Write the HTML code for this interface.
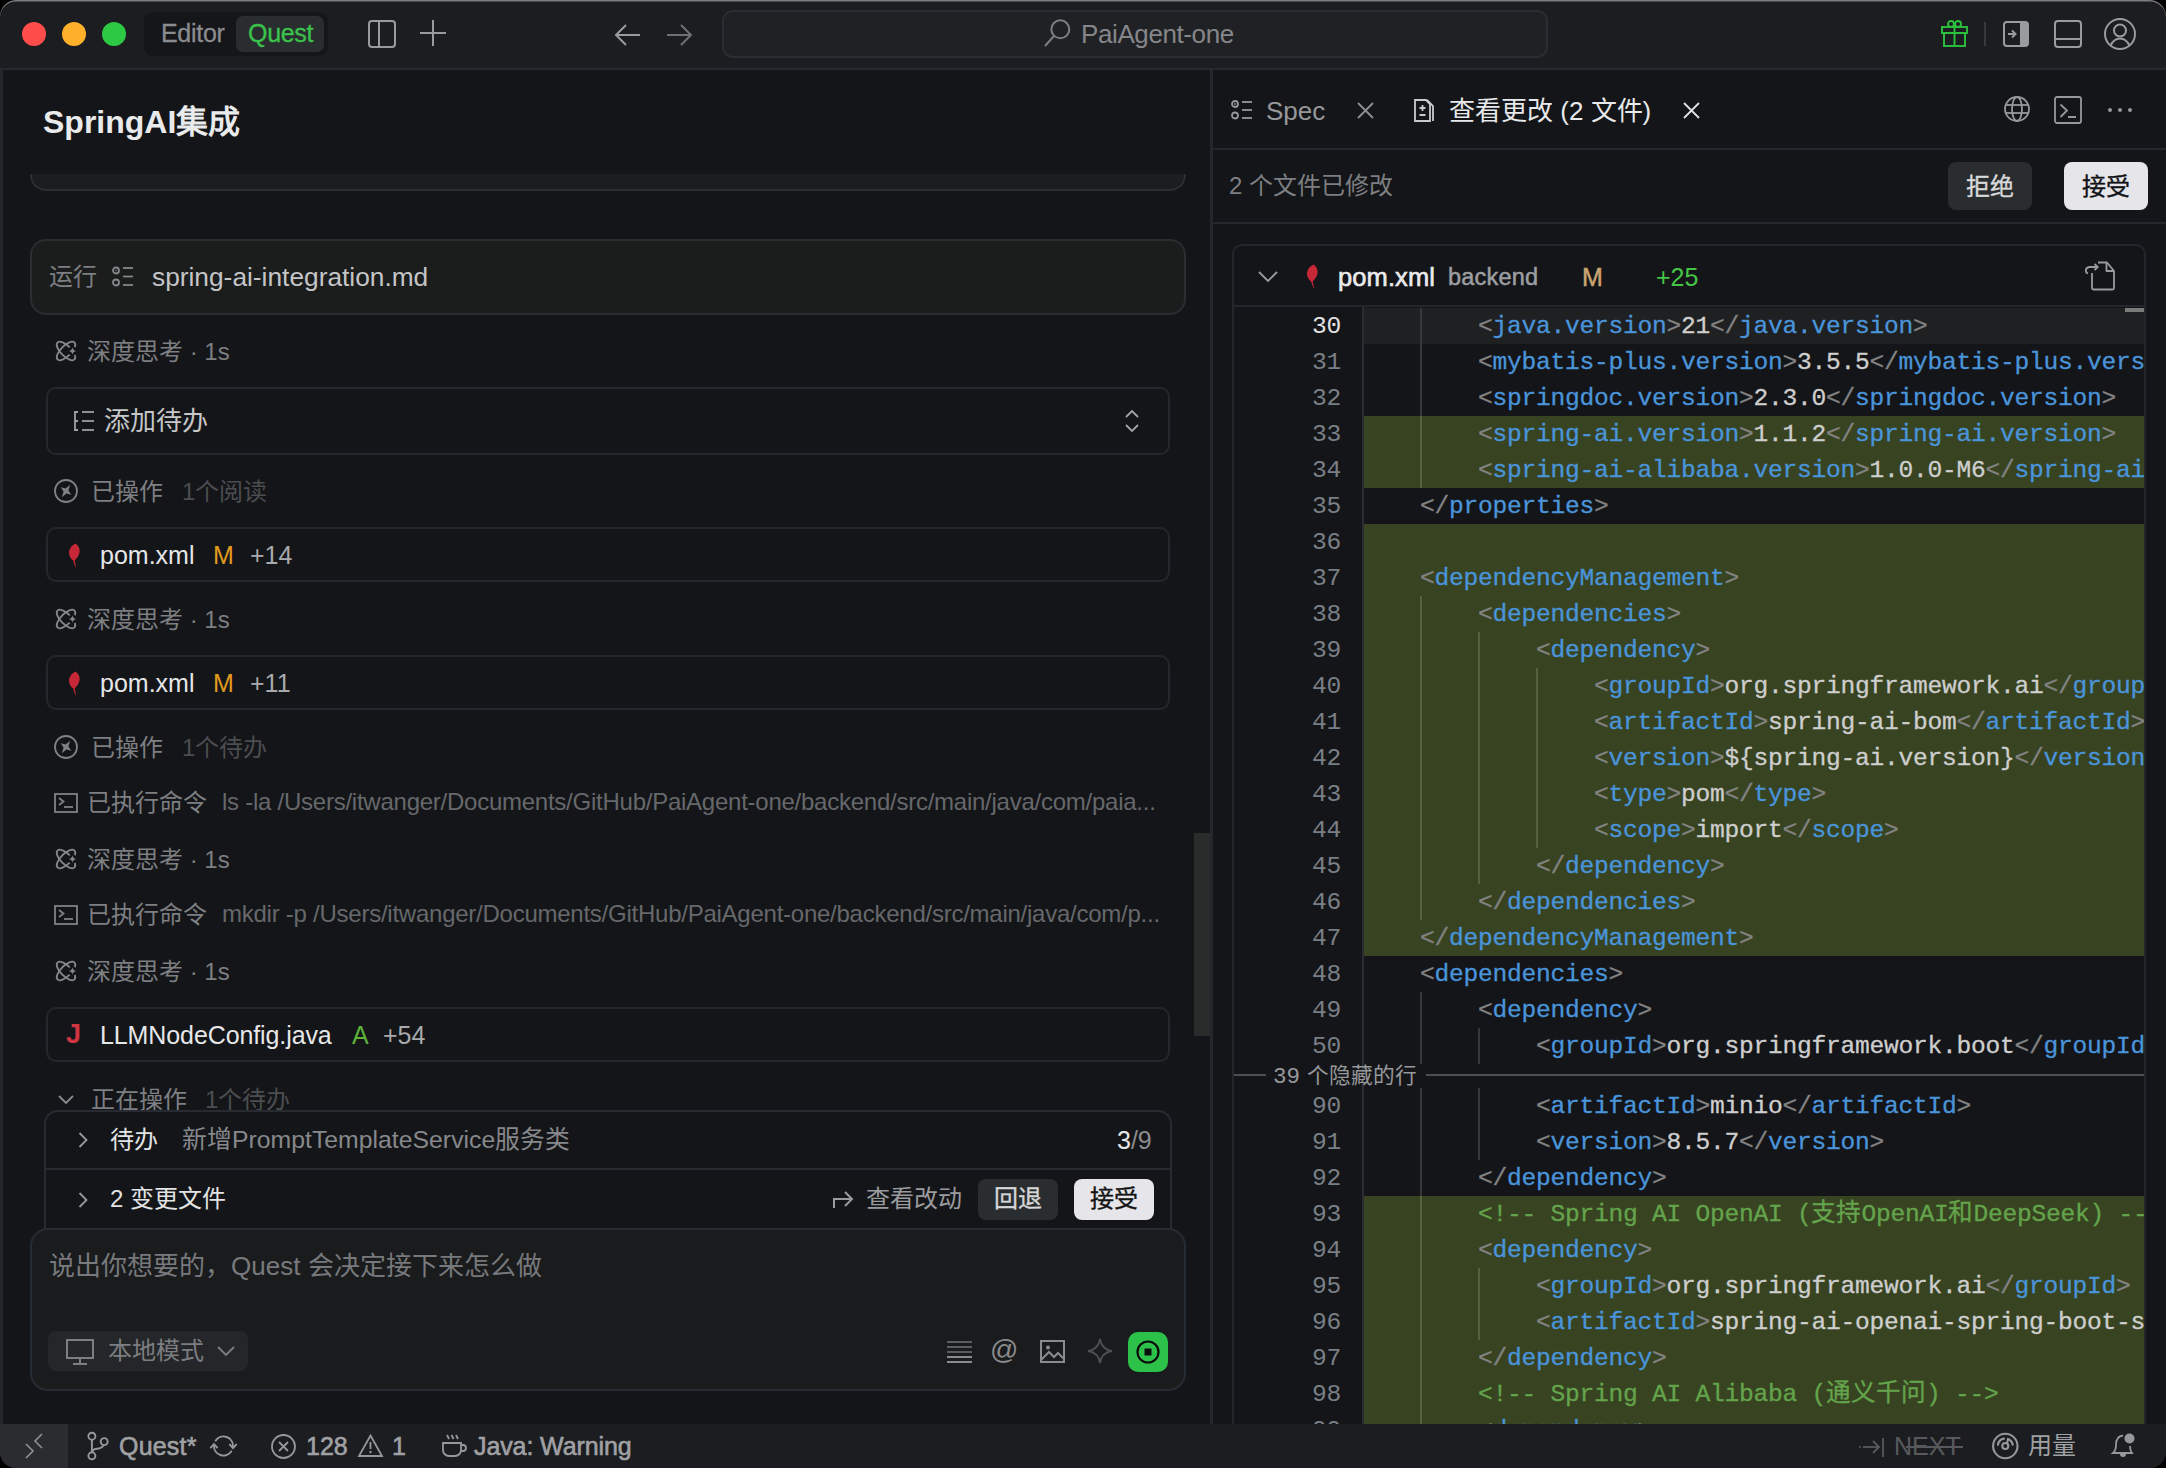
<!DOCTYPE html>
<html lang="zh-CN"><head><meta charset="utf-8">
<style>
*{box-sizing:border-box;margin:0;padding:0}
html,body{width:2166px;height:1468px;overflow:hidden;background:#000}
body{font-family:"Liberation Sans",sans-serif;color:#c9cacc;position:relative}
.win{position:absolute;left:0;top:0;width:2166px;height:1468px;border-radius:16px;overflow:hidden;background:#141518}
.a{position:absolute}
.t{position:absolute;white-space:nowrap;line-height:40px;font-size:26px}
svg{position:absolute;overflow:visible}
.mono{font-family:"Liberation Mono",monospace}
.code{position:absolute;left:1362px;font-family:"Liberation Mono",monospace;font-size:24.6px;letter-spacing:-0.260px;white-space:pre;line-height:36px;color:#cecece;-webkit-text-stroke:0.3px currentColor}
.ln{position:absolute;left:1230px;width:111px;text-align:right;font-family:"Liberation Mono",monospace;font-size:24.6px;letter-spacing:-0.260px;line-height:36px;color:#7a7f86}
.tg{color:#4a94da;-webkit-text-stroke:0.3px #4a94da}.br{color:#838383;-webkit-text-stroke:0.3px #838383}.cm{color:#64a44c;-webkit-text-stroke:0.3px #64a44c}
.add{position:absolute;left:1364px;width:1780px;background:#384421}
.med{-webkit-text-stroke:0.45px currentColor}
</style></head><body>
<div class="win">
<div class="a" style="left:0;top:0;width:2166px;height:68px;background:#1c1d20"></div>
<div class="a" style="left:0;top:68px;width:2166px;height:2px;background:#25292e"></div>
<div class="a" style="left:22px;top:22px;width:24px;height:24px;border-radius:50%;background:#fe4d4a"></div>
<div class="a" style="left:62px;top:22px;width:24px;height:24px;border-radius:50%;background:#fdb12a"></div>
<div class="a" style="left:102px;top:22px;width:24px;height:24px;border-radius:50%;background:#2ec944"></div>
<div class="a" style="left:144px;top:12px;width:184px;height:44px;border-radius:9px;background:#151619"></div>
<div class="a" style="left:236px;top:16px;width:88px;height:36px;border-radius:7px;background:#2a2d2f"></div>
<div class="t" style="left:161px;top:13px;font-size:25px;color:#8b8c8f;letter-spacing:-0.3px;-webkit-text-stroke:0.3px #8b8c8f">Editor</div>
<div class="t" style="left:248px;top:13px;font-size:25px;color:#3ac24c;letter-spacing:-0.3px;-webkit-text-stroke:0.3px #3ac24c">Quest</div>
<svg style="left:368px;top:20px" width="28" height="28" viewBox="0 0 28 28"><rect x="1" y="1" width="26" height="26" rx="3" fill="none" stroke="#9a9b9d" stroke-width="2"/><line x1="11" y1="1" x2="11" y2="27" stroke="#9a9b9d" stroke-width="2"/></svg>
<svg style="left:420px;top:20px" width="26" height="26" viewBox="0 0 26 26"><line x1="13" y1="0" x2="13" y2="26" stroke="#9a9b9d" stroke-width="2"/><line x1="0" y1="13" x2="26" y2="13" stroke="#9a9b9d" stroke-width="2"/></svg>
<svg style="left:615px;top:24px" width="26" height="22" viewBox="0 0 26 22"><path d="M25 11H1M11 1L1 11L11 21" fill="none" stroke="#9a9b9d" stroke-width="2"/></svg>
<svg style="left:667px;top:24px" width="26" height="22" viewBox="0 0 26 22"><path d="M0 11H24M14 1L24 11L14 21" fill="none" stroke="#6f7073" stroke-width="2"/></svg>
<div class="a" style="left:722px;top:10px;width:826px;height:48px;border-radius:11px;background:#202124;border:2px solid #2a2d31"></div>
<svg style="left:1044px;top:19px" width="28" height="30" viewBox="0 0 28 30"><circle cx="16.3" cy="10.3" r="9" fill="none" stroke="#7e7f82" stroke-width="2"/><line x1="10" y1="17" x2="1" y2="27" stroke="#7e7f82" stroke-width="2"/></svg>
<div class="t" style="left:1081px;top:14px;font-size:26px;color:#85868a;letter-spacing:-0.4px">PaiAgent-one</div>
<svg style="left:1941px;top:20px" width="27" height="27" viewBox="0 0 27 27"><g fill="none" stroke="#2cc23e" stroke-width="1.9"><rect x="1" y="7" width="25" height="6"/><rect x="3" y="13" width="21" height="13"/><line x1="13.5" y1="7" x2="13.5" y2="26"/><circle cx="10" cy="4" r="3"/><circle cx="17" cy="4" r="3"/></g></svg>
<div class="a" style="left:1984px;top:22px;width:2px;height:24px;background:#38393c"></div>
<svg style="left:2003px;top:21px" width="26" height="26" viewBox="0 0 26 26"><rect x="1" y="1" width="24" height="24" rx="3" fill="none" stroke="#9a9b9d" stroke-width="2"/><path d="M17 1H22a3 3 0 0 1 3 3V22a3 3 0 0 1 -3 3H17Z" fill="#9a9b9d"/><path d="M5 13H12M9 9.5L12.5 13L9 16.5" fill="none" stroke="#9a9b9d" stroke-width="2"/></svg>
<svg style="left:2054px;top:20px" width="28" height="28" viewBox="0 0 28 28"><rect x="1" y="1" width="26" height="26" rx="3" fill="none" stroke="#9a9b9d" stroke-width="2"/><line x1="1" y1="19" x2="27" y2="19" stroke="#9a9b9d" stroke-width="2"/></svg>
<svg style="left:2104px;top:18px" width="32" height="32" viewBox="0 0 32 32"><circle cx="16" cy="16" r="15" fill="none" stroke="#9a9b9d" stroke-width="2"/><circle cx="16" cy="12.5" r="6" fill="none" stroke="#9a9b9d" stroke-width="2"/><path d="M6.5 27.5C9 22.5 12 20.5 16 20.5S23 22.5 25.5 27.5" fill="none" stroke="#9a9b9d" stroke-width="2"/></svg>
<div class="a" style="left:0;top:70px;width:3px;height:1354px;background:#23262b"></div>
<div class="a" style="left:30px;top:120px;width:1156px;height:71px;border-radius:0 0 16px 16px;background:#1c1d1f;border:2px solid #2b2d30;border-top:none"></div>
<div class="a" style="left:3px;top:70px;width:1207px;height:104px;background:#141518"></div>
<div class="t" style="left:43px;top:102px;font-size:32px;color:#e9eaec;font-weight:700">SpringAI集成</div>
<div class="a" style="left:30px;top:239px;width:1156px;height:76px;border-radius:16px;background:#1b1c1c;border:2px solid #2b2d30"></div>
<div class="t" style="left:49px;top:257px;font-size:24px;color:#7d7f82;">运行</div>
<svg style="left:112px;top:266px" width="22" height="22" viewBox="0 0 22 22"><circle cx="4" cy="4.5" r="3" fill="none" stroke="#85878a" stroke-width="1.8"/><circle cx="4" cy="16.5" r="3" fill="none" stroke="#85878a" stroke-width="1.8"/><circle cx="4" cy="4.5" r="0.8" fill="#85878a"/><line x1="11" y1="2" x2="21" y2="2" stroke="#85878a" stroke-width="1.8"/><line x1="11" y1="10.5" x2="21" y2="10.5" stroke="#85878a" stroke-width="1.8"/><line x1="11" y1="19" x2="21" y2="19" stroke="#85878a" stroke-width="1.8"/></svg>
<div class="t" style="left:152px;top:257px;font-size:26.3px;color:#c4c5c7;">spring-ai-integration.md</div>
<svg style="left:55px;top:340px" width="23" height="22" viewBox="0 0 23 22"><ellipse cx="11" cy="11" rx="12" ry="5.2" transform="rotate(45 11 11)" fill="none" stroke="#85878a" stroke-width="1.8"/><ellipse cx="11" cy="11" rx="12" ry="5.2" transform="rotate(-45 11 11)" fill="none" stroke="#85878a" stroke-width="1.8"/><circle cx="17.5" cy="11" r="4.5" fill="#141518"/><path d="M17.5 7.2Q18 10.5 21.3 11Q18 11.5 17.5 14.8Q17 11.5 13.7 11Q17 10.5 17.5 7.2Z" fill="#85878a"/></svg>
<div class="t" style="left:87px;top:332px;font-size:24px;color:#7d7f82;">深度思考 · 1s</div>
<div class="a" style="left:46px;top:387px;width:1124px;height:68px;border-radius:10px;background:#141518;border:2px solid #24272b"></div>
<svg style="left:74px;top:411px" width="20" height="20" viewBox="0 0 20 20"><g fill="none" stroke="#9fa0a3" stroke-width="1.8"><path d="M1 0V20M1 1H4M1 10H4M1 19H4"/><line x1="8" y1="1" x2="20" y2="1"/><line x1="8" y1="10" x2="20" y2="10"/><line x1="8" y1="19" x2="20" y2="19"/></g></svg>
<div class="t" style="left:104px;top:401px;font-size:26px;color:#c6c7c9;">添加待办</div>
<svg style="left:1124px;top:409px" width="16" height="24" viewBox="0 0 16 24"><path d="M2 8L8 2L14 8M2 16L8 22L14 16" fill="none" stroke="#a3a4a6" stroke-width="1.8"/></svg>
<svg style="left:54px;top:479px" width="24" height="24" viewBox="0 0 24 24"><circle cx="12" cy="12" r="11" fill="none" stroke="#7f8184" stroke-width="1.8"/><path d="M16.2 5.8L14.4 11.6L17.3 15.7L12.4 14.4L7.8 18.2L9.6 12.4L6.7 8.3L11.6 9.6Z" fill="#7f8184"/></svg>
<div class="t" style="left:91px;top:472px;font-size:24px;color:#7d7f82;">已操作</div>
<div class="t" style="left:182px;top:472px;font-size:24px;color:#4b4d50;">1个阅读</div>
<div class="a" style="left:46px;top:527px;width:1124px;height:55px;border-radius:10px;background:#141518;border:2px solid #24272b"></div>
<svg style="left:67px;top:543px" width="14" height="25" viewBox="0 0 14 25"><path d="M8.5 0.5C11.5 2.5 13 5.5 12.6 9C12.2 12.5 9.8 15.5 7.6 17.5C8.4 20 8.9 22.5 8.7 25C7.6 22.5 6.9 20 6.3 17.8C3.6 15.5 1.6 12.5 2 8.5C2.5 5 5 2 8.5 0.5Z" fill="#c72837"/></svg>
<div class="t" style="left:100px;top:535px;font-size:25px;color:#e6e7e9;letter-spacing:0">pom.xml</div>
<div class="t" style="left:213px;top:535px;font-size:25px;color:#e19b20;">M</div>
<div class="t" style="left:250px;top:535px;font-size:25px;color:#a8aaad;">+14</div>
<svg style="left:55px;top:608px" width="23" height="22" viewBox="0 0 23 22"><ellipse cx="11" cy="11" rx="12" ry="5.2" transform="rotate(45 11 11)" fill="none" stroke="#85878a" stroke-width="1.8"/><ellipse cx="11" cy="11" rx="12" ry="5.2" transform="rotate(-45 11 11)" fill="none" stroke="#85878a" stroke-width="1.8"/><circle cx="17.5" cy="11" r="4.5" fill="#141518"/><path d="M17.5 7.2Q18 10.5 21.3 11Q18 11.5 17.5 14.8Q17 11.5 13.7 11Q17 10.5 17.5 7.2Z" fill="#85878a"/></svg>
<div class="t" style="left:87px;top:600px;font-size:24px;color:#7d7f82;">深度思考 · 1s</div>
<div class="a" style="left:46px;top:655px;width:1124px;height:55px;border-radius:10px;background:#141518;border:2px solid #24272b"></div>
<svg style="left:67px;top:671px" width="14" height="25" viewBox="0 0 14 25"><path d="M8.5 0.5C11.5 2.5 13 5.5 12.6 9C12.2 12.5 9.8 15.5 7.6 17.5C8.4 20 8.9 22.5 8.7 25C7.6 22.5 6.9 20 6.3 17.8C3.6 15.5 1.6 12.5 2 8.5C2.5 5 5 2 8.5 0.5Z" fill="#c72837"/></svg>
<div class="t" style="left:100px;top:663px;font-size:25px;color:#e6e7e9;letter-spacing:0">pom.xml</div>
<div class="t" style="left:213px;top:663px;font-size:25px;color:#e19b20;">M</div>
<div class="t" style="left:250px;top:663px;font-size:25px;color:#a8aaad;">+11</div>
<svg style="left:54px;top:735px" width="24" height="24" viewBox="0 0 24 24"><circle cx="12" cy="12" r="11" fill="none" stroke="#7f8184" stroke-width="1.8"/><path d="M16.2 5.8L14.4 11.6L17.3 15.7L12.4 14.4L7.8 18.2L9.6 12.4L6.7 8.3L11.6 9.6Z" fill="#7f8184"/></svg>
<div class="t" style="left:91px;top:728px;font-size:24px;color:#7d7f82;">已操作</div>
<div class="t" style="left:182px;top:728px;font-size:24px;color:#4b4d50;">1个待办</div>
<svg style="left:54px;top:793px" width="24" height="20" viewBox="0 0 24 20"><rect x="1" y="1" width="22" height="18" fill="none" stroke="#7f8184" stroke-width="1.8"/><path d="M5 5L9.5 8.5L5 12" fill="none" stroke="#7f8184" stroke-width="1.8"/><line x1="10" y1="14" x2="19" y2="14" stroke="#7f8184" stroke-width="1.8"/></svg>
<div class="t" style="left:87px;top:783px;font-size:24px;color:#7d7f82;">已执行命令</div>
<div class="t" style="left:222px;top:782px;font-size:24px;color:#66686b;letter-spacing:-0.25px">ls -la /Users/itwanger/Documents/GitHub/PaiAgent-one/backend/src/main/java/com/paia...</div>
<svg style="left:55px;top:848px" width="23" height="22" viewBox="0 0 23 22"><ellipse cx="11" cy="11" rx="12" ry="5.2" transform="rotate(45 11 11)" fill="none" stroke="#85878a" stroke-width="1.8"/><ellipse cx="11" cy="11" rx="12" ry="5.2" transform="rotate(-45 11 11)" fill="none" stroke="#85878a" stroke-width="1.8"/><circle cx="17.5" cy="11" r="4.5" fill="#141518"/><path d="M17.5 7.2Q18 10.5 21.3 11Q18 11.5 17.5 14.8Q17 11.5 13.7 11Q17 10.5 17.5 7.2Z" fill="#85878a"/></svg>
<div class="t" style="left:87px;top:840px;font-size:24px;color:#7d7f82;">深度思考 · 1s</div>
<svg style="left:54px;top:905px" width="24" height="20" viewBox="0 0 24 20"><rect x="1" y="1" width="22" height="18" fill="none" stroke="#7f8184" stroke-width="1.8"/><path d="M5 5L9.5 8.5L5 12" fill="none" stroke="#7f8184" stroke-width="1.8"/><line x1="10" y1="14" x2="19" y2="14" stroke="#7f8184" stroke-width="1.8"/></svg>
<div class="t" style="left:87px;top:895px;font-size:24px;color:#7d7f82;">已执行命令</div>
<div class="t" style="left:222px;top:894px;font-size:24px;color:#66686b;letter-spacing:-0.25px">mkdir -p /Users/itwanger/Documents/GitHub/PaiAgent-one/backend/src/main/java/com/p...</div>
<svg style="left:55px;top:960px" width="23" height="22" viewBox="0 0 23 22"><ellipse cx="11" cy="11" rx="12" ry="5.2" transform="rotate(45 11 11)" fill="none" stroke="#85878a" stroke-width="1.8"/><ellipse cx="11" cy="11" rx="12" ry="5.2" transform="rotate(-45 11 11)" fill="none" stroke="#85878a" stroke-width="1.8"/><circle cx="17.5" cy="11" r="4.5" fill="#141518"/><path d="M17.5 7.2Q18 10.5 21.3 11Q18 11.5 17.5 14.8Q17 11.5 13.7 11Q17 10.5 17.5 7.2Z" fill="#85878a"/></svg>
<div class="t" style="left:87px;top:952px;font-size:24px;color:#7d7f82;">深度思考 · 1s</div>
<div class="a" style="left:46px;top:1007px;width:1124px;height:55px;border-radius:10px;background:#141518;border:2px solid #24272b"></div>
<div class="t" style="left:66px;top:1014px;font-size:27px;font-weight:700;color:#cf3442">J</div>
<div class="t" style="left:100px;top:1015px;font-size:25px;color:#e6e7e9;letter-spacing:-0.1px">LLMNodeConfig.java</div>
<div class="t" style="left:352px;top:1015px;font-size:25px;color:#5cb338;">A</div>
<div class="t" style="left:383px;top:1015px;font-size:25px;color:#a8aaad;">+54</div>
<svg style="left:58px;top:1095px" width="16" height="9" viewBox="0 0 16 9"><path d="M1 1L8 8L15 1" fill="none" stroke="#8a8b8e" stroke-width="1.8"/></svg>
<div class="t" style="left:91px;top:1080px;font-size:24px;color:#7d7f82;">正在操作</div>
<div class="t" style="left:205px;top:1080px;font-size:24px;color:#4b4d50;">1个待办</div>
<div class="a" style="left:44px;top:1110px;width:1128px;height:140px;border-radius:14px 14px 0 0;background:#141518;border:2px solid #272b31;border-bottom:none"></div>
<div class="a" style="left:46px;top:1168px;width:1124px;height:2px;background:#272b31"></div>
<svg style="left:78px;top:1132px" width="10" height="16" viewBox="0 0 10 16"><path d="M1.5 1L8.5 8L1.5 15" fill="none" stroke="#9a9b9e" stroke-width="1.8"/></svg>
<div class="t" style="left:110px;top:1120px;font-size:24px;color:#e2e3e5;">待办</div>
<div class="t" style="left:182px;top:1120px;font-size:24.8px;color:#86888b;">新增PromptTemplateService服务类</div>
<div class="t" style="left:1117px;top:1120px;font-size:25px;color:#e6e7e9">3<span style="color:#8a8b8e">/9</span></div>
<svg style="left:78px;top:1192px" width="10" height="16" viewBox="0 0 10 16"><path d="M1.5 1L8.5 8L1.5 15" fill="none" stroke="#9a9b9e" stroke-width="1.8"/></svg>
<div class="t" style="left:110px;top:1179px;font-size:24px;color:#e2e3e5;">2 变更文件</div>
<svg style="left:832px;top:1188px" width="22" height="20" viewBox="0 0 22 20"><path d="M2 20V11H19M13 4L20 11L13 18" fill="none" stroke="#9a9b9e" stroke-width="2"/></svg>
<div class="t" style="left:866px;top:1179px;font-size:24px;color:#9a9b9e;">查看改动</div>
<div class="a" style="left:978px;top:1179px;width:80px;height:41px;border-radius:8px;background:#2a2d2f"></div>
<div class="t" style="left:994px;top:1179px;font-size:24px;color:#d6d7d9;-webkit-text-stroke:0.35px #d6d7d9">回退</div>
<div class="a" style="left:1074px;top:1179px;width:80px;height:41px;border-radius:8px;background:#e6e6ea"></div>
<div class="t" style="left:1090px;top:1179px;font-size:24px;color:#141414;-webkit-text-stroke:0.35px #141414">接受</div>
<div class="a" style="left:30px;top:1228px;width:1156px;height:163px;border-radius:18px;background:#1a1b1c;border:2px solid #262c33"></div>
<div class="t" style="left:49px;top:1246px;font-size:26px;color:#77797c;">说出你想要的，Quest 会决定接下来怎么做</div>
<div class="a" style="left:48px;top:1331px;width:200px;height:40px;border-radius:8px;background:#252629"></div>
<svg style="left:66px;top:1339px" width="28" height="26" viewBox="0 0 28 26"><rect x="1" y="1" width="26" height="18" fill="none" stroke="#7c7e81" stroke-width="2"/><line x1="14" y1="19" x2="14" y2="25" stroke="#7c7e81" stroke-width="2"/><line x1="7" y1="25" x2="21" y2="25" stroke="#7c7e81" stroke-width="2"/></svg>
<div class="t" style="left:108px;top:1331px;font-size:24px;color:#7c7e81;">本地模式</div>
<svg style="left:217px;top:1346px" width="18" height="10" viewBox="0 0 18 10"><path d="M1 1L9 9L17 1" fill="none" stroke="#7c7e81" stroke-width="1.8"/></svg>
<svg style="left:947px;top:1340px" width="25" height="26" viewBox="0 0 25 26"><g stroke="#5a5c5f" stroke-width="2"><line x1="0" y1="2" x2="25" y2="2"/><line x1="0" y1="7" x2="25" y2="7"/><line x1="0" y1="12" x2="25" y2="12"/></g><g stroke="#8a8b8e" stroke-width="2"><line x1="0" y1="17" x2="25" y2="17"/><line x1="0" y1="22" x2="25" y2="22"/></g></svg>
<div class="t" style="left:990px;top:1330px;font-size:28px;color:#8a8b8e">@</div>
<svg style="left:1040px;top:1340px" width="25" height="23" viewBox="0 0 25 23"><rect x="1" y="1" width="23" height="21" fill="none" stroke="#8a8b8e" stroke-width="2"/><circle cx="8" cy="7.5" r="2" fill="#8a8b8e"/><path d="M1 20L9 12L14 17L18 13L24 19" fill="none" stroke="#8a8b8e" stroke-width="2"/></svg>
<svg style="left:1087px;top:1338px" width="26" height="26" viewBox="0 0 26 26"><path d="M13 1Q14.5 11.5 25 13Q14.5 14.5 13 25Q11.5 14.5 1 13Q11.5 11.5 13 1Z" fill="none" stroke="#4c4e51" stroke-width="1.8"/></svg>
<div class="a" style="left:1128px;top:1332px;width:40px;height:40px;border-radius:10px;background:#2cc24a"></div>
<svg style="left:1133px;top:1337px" width="30" height="30" viewBox="0 0 30 30"><circle cx="15" cy="15" r="10.5" fill="none" stroke="#0c0c0c" stroke-width="2.2"/><rect x="11.5" y="11.5" width="7" height="7" fill="#0c0c0c"/></svg>
<div class="a" style="left:1194px;top:833px;width:16px;height:203px;background:#2a2b2b"></div>
<div class="a" style="left:1210px;top:70px;width:3px;height:1354px;background:#24272c"></div>
<div class="a" style="left:1213px;top:148px;width:953px;height:2px;background:#24272c"></div>
<svg style="left:1231px;top:100px" width="21" height="20" viewBox="0 0 21 20"><circle cx="4" cy="4" r="3" fill="none" stroke="#97989b" stroke-width="1.8"/><circle cx="4" cy="4" r="0.9" fill="#97989b"/><circle cx="4" cy="15.5" r="3" fill="none" stroke="#97989b" stroke-width="1.8"/><line x1="11" y1="2" x2="21" y2="2" stroke="#97989b" stroke-width="1.8"/><line x1="11" y1="10" x2="21" y2="10" stroke="#97989b" stroke-width="1.8"/><line x1="11" y1="18" x2="21" y2="18" stroke="#97989b" stroke-width="1.8"/></svg>
<div class="t" style="left:1266px;top:91px;font-size:26px;color:#97989b;">Spec</div>
<svg style="left:1357px;top:102px" width="17" height="17" viewBox="0 0 17 17"><path d="M1 1L16 16M16 1L1 16" fill="none" stroke="#8f9093" stroke-width="1.8"/></svg>
<svg style="left:1413px;top:99px" width="22" height="23" viewBox="0 0 22 23"><g fill="none" stroke="#c9cacc" stroke-width="1.8"><path d="M2 1H13L17 5V22H2Z"/><path d="M14 1L20 7V22"/><path d="M9.5 6V12M6.5 9H12.5M6.5 16H12.5"/></g></svg>
<div class="t" style="left:1449px;top:91px;font-size:26px;color:#e8e9eb;">查看更改 (2 文件)</div>
<svg style="left:1683px;top:102px" width="17" height="17" viewBox="0 0 17 17"><path d="M1 1L16 16M16 1L1 16" fill="none" stroke="#e0e1e3" stroke-width="1.8"/></svg>
<svg style="left:2004px;top:96px" width="26" height="26" viewBox="0 0 26 26"><g fill="none" stroke="#97989b" stroke-width="1.8"><circle cx="13" cy="13" r="12"/><ellipse cx="13" cy="13" rx="5" ry="12"/><line x1="1" y1="9" x2="25" y2="9"/><line x1="1" y1="17" x2="25" y2="17"/></g></svg>
<svg style="left:2054px;top:96px" width="28" height="28" viewBox="0 0 28 28"><g fill="none" stroke="#97989b" stroke-width="1.8"><rect x="1" y="1" width="26" height="26" rx="2"/><path d="M6.5 8.5L13 14.5L6.5 21"/><line x1="14" y1="21" x2="22" y2="21"/></g></svg>
<div class="a" style="left:2107.8px;top:107.8px;width:4.4px;height:4.4px;border-radius:50%;background:#97989b"></div>
<div class="a" style="left:2117.8px;top:107.8px;width:4.4px;height:4.4px;border-radius:50%;background:#97989b"></div>
<div class="a" style="left:2127.8px;top:107.8px;width:4.4px;height:4.4px;border-radius:50%;background:#97989b"></div>
<div class="t" style="left:1229px;top:166px;font-size:24px;color:#7d7f82;">2 个文件已修改</div>
<div class="a" style="left:1948px;top:162px;width:84px;height:48px;border-radius:8px;background:#2a2d2f"></div>
<div class="t" style="left:1966px;top:167px;font-size:24px;color:#d8d9db;-webkit-text-stroke:0.35px #d8d9db">拒绝</div>
<div class="a" style="left:2064px;top:162px;width:84px;height:48px;border-radius:8px;background:#e6e6ea"></div>
<div class="t" style="left:2082px;top:167px;font-size:24px;color:#111214;-webkit-text-stroke:0.35px #111214">接受</div>
<div class="a" style="left:1213px;top:222px;width:953px;height:2px;background:#24272c"></div>
<div class="a" style="left:1232px;top:244px;width:914px;height:1260px;border-radius:10px;border:2px solid #23272c"></div>
<div class="a" style="left:1234px;top:305px;width:910px;height:2px;background:#23272c"></div>
<svg style="left:1258px;top:271px" width="20" height="11" viewBox="0 0 20 11"><path d="M1 1L10 10L19 1" fill="none" stroke="#9a9b9e" stroke-width="1.8"/></svg>
<svg style="left:1305px;top:264px" width="14" height="25" viewBox="0 0 14 25"><path d="M8.5 0.5C11.5 2.5 13 5.5 12.6 9C12.2 12.5 9.8 15.5 7.6 17.5C8.4 20 8.9 22.5 8.7 25C7.6 22.5 6.9 20 6.3 17.8C3.6 15.5 1.6 12.5 2 8.5C2.5 5 5 2 8.5 0.5Z" fill="#c72837"/></svg>
<div class="t" style="left:1338px;top:257px;font-size:25.5px;color:#ebebed;-webkit-text-stroke:0.6px #ebebed;letter-spacing:0.1px">pom.xml</div>
<div class="t" style="left:1448px;top:257px;font-size:23.5px;color:#9d9ea1;-webkit-text-stroke:0.5px #9d9ea1;letter-spacing:0.2px">backend</div>
<div class="t" style="left:1582px;top:257px;font-size:25px;color:#c9a572;-webkit-text-stroke:0.5px #c9a572">M</div>
<div class="t" style="left:1656px;top:257px;font-size:25px;color:#46c646;">+25</div>
<svg style="left:2084px;top:261px" width="32" height="30" viewBox="0 0 32 30"><g fill="none" stroke="#9a9b9e" stroke-width="1.8" stroke-linejoin="round"><path d="M8 12V27Q8 28.5 9.5 28.5H28.5Q30 28.5 30 27V10L23 1.5H14"/><path d="M22.5 1.5V10H30"/><path d="M4 12.5C1 11.5 0.8 6.5 5.5 6H13.5M10.5 2.8L13.8 6L10.5 9.2"/></g></svg>
<div class="a" style="left:0;top:0;width:2144px;height:1424px;overflow:hidden"><div class="a" style="left:1362px;top:307px;width:2px;height:1117px;background:#2a2d31"></div>
<div class="a" style="left:1364px;top:308px;width:1780px;height:36px;background:#1f2021"></div>
<div class="add" style="top:416px;height:72px"></div>
<div class="add" style="top:524px;height:432px"></div>
<div class="add" style="top:1196px;height:228px"></div>
<div class="a" style="left:1420px;top:308px;width:2px;height:36px;background:#36383b"></div>
<div class="a" style="left:1420px;top:344px;width:2px;height:36px;background:#36383b"></div>
<div class="a" style="left:1420px;top:380px;width:2px;height:36px;background:#36383b"></div>
<div class="a" style="left:1420px;top:416px;width:2px;height:36px;background:#56623c"></div>
<div class="a" style="left:1420px;top:452px;width:2px;height:36px;background:#56623c"></div>
<div class="a" style="left:1420px;top:596px;width:2px;height:36px;background:#56623c"></div>
<div class="a" style="left:1420px;top:632px;width:2px;height:36px;background:#56623c"></div>
<div class="a" style="left:1420px;top:668px;width:2px;height:36px;background:#56623c"></div>
<div class="a" style="left:1420px;top:704px;width:2px;height:36px;background:#56623c"></div>
<div class="a" style="left:1420px;top:740px;width:2px;height:36px;background:#56623c"></div>
<div class="a" style="left:1420px;top:776px;width:2px;height:36px;background:#56623c"></div>
<div class="a" style="left:1420px;top:812px;width:2px;height:36px;background:#56623c"></div>
<div class="a" style="left:1420px;top:848px;width:2px;height:36px;background:#56623c"></div>
<div class="a" style="left:1420px;top:884px;width:2px;height:36px;background:#56623c"></div>
<div class="a" style="left:1420px;top:992px;width:2px;height:36px;background:#36383b"></div>
<div class="a" style="left:1420px;top:1028px;width:2px;height:36px;background:#36383b"></div>
<div class="a" style="left:1420px;top:1088px;width:2px;height:36px;background:#36383b"></div>
<div class="a" style="left:1420px;top:1124px;width:2px;height:36px;background:#36383b"></div>
<div class="a" style="left:1420px;top:1160px;width:2px;height:36px;background:#36383b"></div>
<div class="a" style="left:1420px;top:1196px;width:2px;height:36px;background:#56623c"></div>
<div class="a" style="left:1420px;top:1232px;width:2px;height:36px;background:#56623c"></div>
<div class="a" style="left:1420px;top:1268px;width:2px;height:36px;background:#56623c"></div>
<div class="a" style="left:1420px;top:1304px;width:2px;height:36px;background:#56623c"></div>
<div class="a" style="left:1420px;top:1340px;width:2px;height:36px;background:#56623c"></div>
<div class="a" style="left:1420px;top:1376px;width:2px;height:36px;background:#56623c"></div>
<div class="a" style="left:1420px;top:1412px;width:2px;height:36px;background:#56623c"></div>
<div class="a" style="left:1478px;top:632px;width:2px;height:36px;background:#56623c"></div>
<div class="a" style="left:1478px;top:668px;width:2px;height:36px;background:#56623c"></div>
<div class="a" style="left:1478px;top:704px;width:2px;height:36px;background:#56623c"></div>
<div class="a" style="left:1478px;top:740px;width:2px;height:36px;background:#56623c"></div>
<div class="a" style="left:1478px;top:776px;width:2px;height:36px;background:#56623c"></div>
<div class="a" style="left:1478px;top:812px;width:2px;height:36px;background:#56623c"></div>
<div class="a" style="left:1478px;top:848px;width:2px;height:36px;background:#56623c"></div>
<div class="a" style="left:1478px;top:1028px;width:2px;height:36px;background:#36383b"></div>
<div class="a" style="left:1478px;top:1088px;width:2px;height:36px;background:#36383b"></div>
<div class="a" style="left:1478px;top:1124px;width:2px;height:36px;background:#36383b"></div>
<div class="a" style="left:1478px;top:1268px;width:2px;height:36px;background:#56623c"></div>
<div class="a" style="left:1478px;top:1304px;width:2px;height:36px;background:#56623c"></div>
<div class="a" style="left:1536px;top:668px;width:2px;height:36px;background:#56623c"></div>
<div class="a" style="left:1536px;top:704px;width:2px;height:36px;background:#56623c"></div>
<div class="a" style="left:1536px;top:740px;width:2px;height:36px;background:#56623c"></div>
<div class="a" style="left:1536px;top:776px;width:2px;height:36px;background:#56623c"></div>
<div class="a" style="left:1536px;top:812px;width:2px;height:36px;background:#56623c"></div>
<div class="ln" style="top:309px;color:#e2e2e2">30</div>
<div class="code" style="top:309px">        <span class="br">&lt;</span><span class="tg">java.version</span><span class="br">&gt;</span>21<span class="br">&lt;/</span><span class="tg">java.version</span><span class="br">&gt;</span></div>
<div class="ln" style="top:345px;color:#7a7f86">31</div>
<div class="code" style="top:345px">        <span class="br">&lt;</span><span class="tg">mybatis-plus.version</span><span class="br">&gt;</span>3.5.5<span class="br">&lt;/</span><span class="tg">mybatis-plus.version</span><span class="br">&gt;</span></div>
<div class="ln" style="top:381px;color:#7a7f86">32</div>
<div class="code" style="top:381px">        <span class="br">&lt;</span><span class="tg">springdoc.version</span><span class="br">&gt;</span>2.3.0<span class="br">&lt;/</span><span class="tg">springdoc.version</span><span class="br">&gt;</span></div>
<div class="ln" style="top:417px;color:#7a7f86">33</div>
<div class="code" style="top:417px">        <span class="br">&lt;</span><span class="tg">spring-ai.version</span><span class="br">&gt;</span>1.1.2<span class="br">&lt;/</span><span class="tg">spring-ai.version</span><span class="br">&gt;</span></div>
<div class="ln" style="top:453px;color:#7a7f86">34</div>
<div class="code" style="top:453px">        <span class="br">&lt;</span><span class="tg">spring-ai-alibaba.version</span><span class="br">&gt;</span>1.0.0-M6<span class="br">&lt;/</span><span class="tg">spring-ai-alibaba.version</span><span class="br">&gt;</span></div>
<div class="ln" style="top:489px;color:#7a7f86">35</div>
<div class="code" style="top:489px">    <span class="br">&lt;/</span><span class="tg">properties</span><span class="br">&gt;</span></div>
<div class="ln" style="top:525px;color:#7a7f86">36</div>
<div class="code" style="top:525px"></div>
<div class="ln" style="top:561px;color:#7a7f86">37</div>
<div class="code" style="top:561px">    <span class="br">&lt;</span><span class="tg">dependencyManagement</span><span class="br">&gt;</span></div>
<div class="ln" style="top:597px;color:#7a7f86">38</div>
<div class="code" style="top:597px">        <span class="br">&lt;</span><span class="tg">dependencies</span><span class="br">&gt;</span></div>
<div class="ln" style="top:633px;color:#7a7f86">39</div>
<div class="code" style="top:633px">            <span class="br">&lt;</span><span class="tg">dependency</span><span class="br">&gt;</span></div>
<div class="ln" style="top:669px;color:#7a7f86">40</div>
<div class="code" style="top:669px">                <span class="br">&lt;</span><span class="tg">groupId</span><span class="br">&gt;</span>org.springframework.ai<span class="br">&lt;/</span><span class="tg">groupId</span><span class="br">&gt;</span></div>
<div class="ln" style="top:705px;color:#7a7f86">41</div>
<div class="code" style="top:705px">                <span class="br">&lt;</span><span class="tg">artifactId</span><span class="br">&gt;</span>spring-ai-bom<span class="br">&lt;/</span><span class="tg">artifactId</span><span class="br">&gt;</span></div>
<div class="ln" style="top:741px;color:#7a7f86">42</div>
<div class="code" style="top:741px">                <span class="br">&lt;</span><span class="tg">version</span><span class="br">&gt;</span>${spring-ai.version}<span class="br">&lt;/</span><span class="tg">version</span><span class="br">&gt;</span></div>
<div class="ln" style="top:777px;color:#7a7f86">43</div>
<div class="code" style="top:777px">                <span class="br">&lt;</span><span class="tg">type</span><span class="br">&gt;</span>pom<span class="br">&lt;/</span><span class="tg">type</span><span class="br">&gt;</span></div>
<div class="ln" style="top:813px;color:#7a7f86">44</div>
<div class="code" style="top:813px">                <span class="br">&lt;</span><span class="tg">scope</span><span class="br">&gt;</span>import<span class="br">&lt;/</span><span class="tg">scope</span><span class="br">&gt;</span></div>
<div class="ln" style="top:849px;color:#7a7f86">45</div>
<div class="code" style="top:849px">            <span class="br">&lt;/</span><span class="tg">dependency</span><span class="br">&gt;</span></div>
<div class="ln" style="top:885px;color:#7a7f86">46</div>
<div class="code" style="top:885px">        <span class="br">&lt;/</span><span class="tg">dependencies</span><span class="br">&gt;</span></div>
<div class="ln" style="top:921px;color:#7a7f86">47</div>
<div class="code" style="top:921px">    <span class="br">&lt;/</span><span class="tg">dependencyManagement</span><span class="br">&gt;</span></div>
<div class="ln" style="top:957px;color:#7a7f86">48</div>
<div class="code" style="top:957px">    <span class="br">&lt;</span><span class="tg">dependencies</span><span class="br">&gt;</span></div>
<div class="ln" style="top:993px;color:#7a7f86">49</div>
<div class="code" style="top:993px">        <span class="br">&lt;</span><span class="tg">dependency</span><span class="br">&gt;</span></div>
<div class="ln" style="top:1029px;color:#7a7f86">50</div>
<div class="code" style="top:1029px">            <span class="br">&lt;</span><span class="tg">groupId</span><span class="br">&gt;</span>org.springframework.boot<span class="br">&lt;/</span><span class="tg">groupId</span><span class="br">&gt;</span></div>
<div class="ln" style="top:1089px;color:#7a7f86">90</div>
<div class="code" style="top:1089px">            <span class="br">&lt;</span><span class="tg">artifactId</span><span class="br">&gt;</span>minio<span class="br">&lt;/</span><span class="tg">artifactId</span><span class="br">&gt;</span></div>
<div class="ln" style="top:1125px;color:#7a7f86">91</div>
<div class="code" style="top:1125px">            <span class="br">&lt;</span><span class="tg">version</span><span class="br">&gt;</span>8.5.7<span class="br">&lt;/</span><span class="tg">version</span><span class="br">&gt;</span></div>
<div class="ln" style="top:1161px;color:#7a7f86">92</div>
<div class="code" style="top:1161px">        <span class="br">&lt;/</span><span class="tg">dependency</span><span class="br">&gt;</span></div>
<div class="ln" style="top:1197px;color:#7a7f86">93</div>
<div class="code" style="top:1197px">        <span class="cm">&lt;!-- Spring AI OpenAI (<span style="letter-spacing:0">支持</span>OpenAI<span style="letter-spacing:0">和</span>DeepSeek) --&gt;</span></div>
<div class="ln" style="top:1233px;color:#7a7f86">94</div>
<div class="code" style="top:1233px">        <span class="br">&lt;</span><span class="tg">dependency</span><span class="br">&gt;</span></div>
<div class="ln" style="top:1269px;color:#7a7f86">95</div>
<div class="code" style="top:1269px">            <span class="br">&lt;</span><span class="tg">groupId</span><span class="br">&gt;</span>org.springframework.ai<span class="br">&lt;/</span><span class="tg">groupId</span><span class="br">&gt;</span></div>
<div class="ln" style="top:1305px;color:#7a7f86">96</div>
<div class="code" style="top:1305px">            <span class="br">&lt;</span><span class="tg">artifactId</span><span class="br">&gt;</span>spring-ai-openai-spring-boot-starter<span class="br">&lt;/</span><span class="tg">artifactId</span><span class="br">&gt;</span></div>
<div class="ln" style="top:1341px;color:#7a7f86">97</div>
<div class="code" style="top:1341px">        <span class="br">&lt;/</span><span class="tg">dependency</span><span class="br">&gt;</span></div>
<div class="ln" style="top:1377px;color:#7a7f86">98</div>
<div class="code" style="top:1377px">        <span class="cm">&lt;!-- Spring AI Alibaba (<span style="letter-spacing:0">通义千问</span>) --&gt;</span></div>
<div class="ln" style="top:1413px;color:#7a7f86">99</div>
<div class="code" style="top:1413px">        <span class="br">&lt;</span><span class="tg">dependency</span><span class="br">&gt;</span></div>
<div class="a" style="left:1234px;top:1074px;width:32px;height:2px;background:#4e4f52"></div>
<div class="a" style="left:1426px;top:1074px;width:718px;height:2px;background:#4e4f52"></div>
<div class="t" style="left:1273px;top:1056px;font-size:22px;color:#97989b;line-height:40px"><span class="mono" style="font-size:22.5px">39</span><span style="margin-left:7px;font-size:21.7px">个隐藏的行</span></div>
<div class="a" style="left:2125px;top:308px;width:19px;height:4px;background:#7a7b7b"></div></div>
<div class="a" style="left:0;top:1424px;width:2166px;height:44px;background:#1c1d20"></div>
<div class="a" style="left:0;top:1424px;width:68px;height:44px;background:#2b2c2f"></div>
<svg style="left:25px;top:1434px" width="18" height="24" viewBox="0 0 18 24"><path d="M1 10L8 17L1 24M17 0L10 7L17 14" fill="none" stroke="#8f9093" stroke-width="1.6"/></svg>
<svg style="left:87px;top:1432px" width="22" height="28" viewBox="0 0 22 28"><g fill="none" stroke="#97989b" stroke-width="1.9"><circle cx="4.9" cy="4.2" r="3.5"/><circle cx="4.9" cy="23.8" r="3.5"/><circle cx="17.2" cy="9.6" r="3.5"/><line x1="4.9" y1="7.7" x2="4.9" y2="20.3"/><path d="M16.5 13C15.5 16 13 16.5 10 16.8C6.5 17.2 5 18.5 4.9 20.3"/></g></svg>
<div class="t" style="left:119px;top:1426px;font-size:25px;color:#a0a1a4;-webkit-text-stroke:0.6px #a0a1a4;letter-spacing:0.2px">Quest*</div>
<svg style="left:209px;top:1434px" width="29" height="24" viewBox="0 0 29 24"><g fill="none" stroke="#97989b" stroke-width="1.9" stroke-linecap="round"><path d="M6.7 6.6A9.5 9.5 0 0 1 24 12.6"/><path d="M20.8 10.6L24 14L27.2 10.6"/><path d="M22.3 17.4A9.5 9.5 0 0 1 5 11.6"/><path d="M1.8 13.6L5 10.2L8.2 13.6"/></g></svg>
<svg style="left:271px;top:1434px" width="25" height="25" viewBox="0 0 25 25"><g fill="none" stroke="#97989b" stroke-width="1.8"><circle cx="12.5" cy="12.5" r="11.5"/><path d="M8 8L17 17M17 8L8 17"/></g></svg>
<div class="t" style="left:306px;top:1426px;font-size:25px;color:#a0a1a4;-webkit-text-stroke:0.6px #a0a1a4">128</div>
<svg style="left:358px;top:1434px" width="25" height="23" viewBox="0 0 25 23"><g fill="none" stroke="#97989b" stroke-width="1.8"><path d="M12.5 1.5L24 22H1Z"/><line x1="12.5" y1="8" x2="12.5" y2="15"/></g><circle cx="12.5" cy="18" r="1.2" fill="#97989b"/></svg>
<div class="t" style="left:392px;top:1426px;font-size:25px;color:#a0a1a4;-webkit-text-stroke:0.6px #a0a1a4">1</div>
<svg style="left:441px;top:1434px" width="26" height="23" viewBox="0 0 26 23"><g fill="none" stroke="#97989b" stroke-width="1.8"><path d="M2 9H20V16A6 6 0 0 1 14 22H8A6 6 0 0 1 2 16Z"/><path d="M20 11H22A3 3 0 0 1 22 17H19"/><path d="M6 1L8 5M10.5 1L12.5 5M15 1L17 5"/></g></svg>
<div class="t" style="left:474px;top:1426px;font-size:25px;color:#a0a1a4;-webkit-text-stroke:0.6px #a0a1a4;letter-spacing:-0.1px">Java: Warning</div>
<svg style="left:1859px;top:1438px" width="26" height="19" viewBox="0 0 26 19"><g fill="none" stroke="#58595c" stroke-width="1.8"><line x1="4" y1="9" x2="20" y2="9"/><path d="M14 3L20 9L14 15"/><line x1="24" y1="0" x2="24" y2="19"/></g><circle cx="1" cy="9" r="1" fill="#58595c"/></svg>
<div class="t" style="left:1894px;top:1426px;font-size:25px;color:#58595c;">NEXT</div>
<div class="a" style="left:1906px;top:1446px;width:57px;height:2px;background:#58595c"></div>
<svg style="left:1992px;top:1433px" width="27" height="27" viewBox="0 0 27 27"><g fill="none" stroke="#97989b" stroke-width="2.1" stroke-linecap="round"><circle cx="13.3" cy="13" r="12.2"/><path d="M5.9 11.7A7.5 7.5 0 0 1 12 5.6"/><path d="M15.9 5.95A7.5 7.5 0 0 1 20.7 11.7"/><circle cx="13.3" cy="13" r="3"/><line x1="15" y1="10.5" x2="16" y2="6.2"/></g></svg>
<div class="t" style="left:2028px;top:1426px;font-size:24px;color:#a0a1a4;">用量</div>
<svg style="left:2111px;top:1433px" width="25" height="26" viewBox="0 0 25 26"><g fill="none" stroke="#97989b" stroke-width="1.8"><path d="M12 2.5C6 3 5 7.5 5 12C5 16 4.5 18 2 20H21C19.5 18 19 16 19 13"/></g><path d="M9 21A3 3 0 0 0 15 21Z" fill="#97989b"/><circle cx="18.5" cy="5.5" r="5" fill="#97989b"/></svg>
<div class="a" style="left:0;top:0;width:2166px;height:1468px;border-radius:16px;box-shadow:inset 0 1.5px 0 #7c7c7c"></div>
</div>
</body></html>
